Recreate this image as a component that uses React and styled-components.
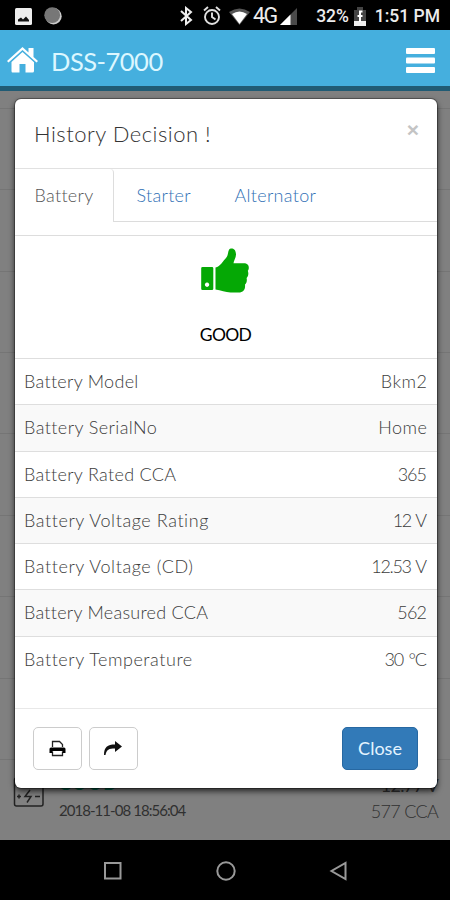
import styled, { createGlobalStyle } from "styled-components";

const GlobalStyle = createGlobalStyle`
  * {
    box-sizing: border-box;
  }

  body {
    margin: 0;
    background: #000;
    font-family: Lato, "Open Sans", sans-serif;
    font-weight: 300;
  }
`;

const Screen = styled.div`
  position: relative;
  display: flex;
  flex-direction: column;
  width: 450px;
  height: 900px;
  overflow: hidden;
`;

const StatusBar = styled.div`
  display: flex;
  align-items: center;
  justify-content: space-between;
  height: 30px;
  padding: 2px 10px 0 15px;
  background: #000;
  color: #ececec;
  font-family: Roboto, sans-serif;
  font-weight: 500;
  font-size: 17.5px;
`;

const StatusGroup = styled.div`
  display: flex;
  align-items: center;
`;

const Icon = styled.svg`
  display: block;
  flex: none;
  margin-left: ${(props) => props.$gap || 0}px;
`;

const StatusText = styled.span`
  margin-left: ${(props) => props.$gap}px;
  font-size: ${(props) => props.$size || 17.5}px;
  font-weight: ${(props) => props.$weight || 500};
  letter-spacing: ${(props) => props.$spacing || 0}px;
  line-height: 30px;
  white-space: nowrap;
`;

const AppBar = styled.header`
  display: flex;
  align-items: center;
  height: 61px;
  padding: 5px 15px 0 7px;
  background: #45afde;
  border-bottom: 5px solid #205b74;
`;

const AppTitle = styled.h1`
  flex: 1;
  margin: 2px 0 0 13px;
  font-size: 25.5px;
  font-weight: 400;
  letter-spacing: -0.5px;
  line-height: 30px;
  color: #dcf7ff;
`;

const History = styled.div`
  flex: 1;
  display: flex;
  flex-direction: column;
  padding-top: 17px;
  background: #808080;
`;

const HistoryRow = styled.div`
  display: flex;
  justify-content: space-between;
  height: 81.4px;
  padding: 12px 12px 0 13px;
  border-top: 1px solid #757575;
`;

const HistoryInfo = styled.div`
  display: flex;
  gap: 14px;
`;

const HistoryText = styled.div`
  display: flex;
  flex-direction: column;
  align-items: ${(props) => (props.$right ? "flex-end" : "flex-start")};
  color: #303030;
  line-height: 26px;
`;

const Verdict = styled.b`
  height: 25px;
  color: #00684c;
  font-size: 18px;
  font-weight: 700;
  letter-spacing: 1px;
  line-height: 22px;
`;

const Stamp = styled.span`
  margin-left: 1px;
  font-size: 15px;
  font-weight: 400;
  letter-spacing: -0.95px;
`;

const Reading = styled.span`
  font-size: 18px;
  font-weight: ${(props) => (props.$bold ? 400 : 300)};
  letter-spacing: -0.7px;
`;

const Modal = styled.section`
  position: absolute;
  left: 15px;
  top: 99px;
  width: 422px;
  height: 689px;
  display: flex;
  flex-direction: column;
  border-radius: 6px;
  background: #fff;
  box-shadow: 0 0 0 1px rgba(0, 0, 0, 0.3), 0 3px 6px rgba(0, 0, 0, 0.75);
`;

const ModalHeader = styled.div`
  display: flex;
  justify-content: space-between;
  height: 70px;
  padding: 20px 18px 0 19px;
  border-bottom: 1px solid #e1e1e1;
`;

const ModalTitle = styled.h2`
  margin: 0;
  font-size: 22px;
  font-weight: 300;
  letter-spacing: 0.5px;
  line-height: 30px;
  color: #333;
`;

const Dismiss = styled.button`
  height: 22px;
  padding: 0;
  border: 0;
  background: none;
  color: #c4c4c4;
  font: 700 21px/22px "Liberation Sans", sans-serif;
`;

const Tabs = styled.div`
  display: flex;
  height: 53px;
  border-bottom: 1px solid #dcdcdc;
`;

const Tab = styled.div`
  height: 53px;
  width: ${(props) => props.$width}px;
  padding-left: ${(props) => (props.$active ? 19.5 : 22.5)}px;
  border-right: 1px solid ${(props) => (props.$active ? "#ddd" : "transparent")};
  border-top-right-radius: 4px;
  background: ${(props) => (props.$active ? "#fff" : "transparent")};
  color: ${(props) => (props.$active ? "#555" : "#3070b5")};
  font-size: 18px;
  letter-spacing: 0.3px;
  line-height: 52px;
  white-space: nowrap;
`;

const Result = styled.div`
  display: flex;
  flex-direction: column;
  align-items: center;
  height: 123px;
  margin-top: 13px;
  padding: 12px 2px 0 0;
  border-top: 1px solid #ddd;
  color: #000;
`;

const ResultLabel = styled.div`
  margin: 27px 0 0 1px;
  font-size: 17.5px;
  font-weight: 400;
  letter-spacing: -0.7px;
  line-height: 28px;
`;

const Table = styled.div`
  display: flex;
  flex-direction: column;
`;

const Row = styled.div`
  display: flex;
  justify-content: space-between;
  height: 46.3px;
  padding: 0 10px 0 9px;
  border-top: 1px solid #dedede;
  font-size: 18px;
  line-height: 45.6px;
  color: #3c3c3c;

  &:nth-child(even) {
    background: #f9f9f9;
  }
`;

const Cell = styled.span`
  letter-spacing: ${(props) => props.$spacing}px;
  margin-right: ${(props) => -props.$spacing}px;
`;

const Value = styled(Cell)`
  word-spacing: 1.5px;
`;

const ModalFooter = styled.div`
  display: flex;
  gap: 6.5px;
  height: 80px;
  margin-top: auto;
  padding: 18px 19px 0 18px;
  border-top: 1px solid #e8e8e8;
`;

const IconButton = styled.button`
  display: flex;
  align-items: center;
  justify-content: center;
  width: 49px;
  height: 43px;
  padding: 0 0 1px;
  border: 1px solid #ccc;
  border-radius: 5px;
  background: #fff;
`;

const CloseButton = styled.button`
  width: 76px;
  height: 43px;
  margin-left: auto;
  padding: 0 0 2px;
  border: 1px solid #2768a2;
  border-radius: 5px;
  background: #327ab8;
  color: #e5f4ff;
  font: 400 18px Lato, sans-serif;
`;

const NavBar = styled.nav`
  display: flex;
  align-items: center;
  justify-content: space-between;
  height: 60px;
  padding: 1px 102px 0 103px;
  background: #000;
`;

const tabs = [
  { label: "Battery", width: 99, active: true },
  { label: "Starter", width: 98 },
  { label: "Alternator", width: 130 },
];

// name, value, and the tracking of each
const rows = [
  ["Battery Model", "Bkm2", 0.3, 0.5],
  ["Battery SerialNo", "Home", 0.42, 0.5],
  ["Battery Rated CCA", "365", 0.32, -1],
  ["Battery Voltage Rating", "12 V", 0.58, -1.4],
  ["Battery Voltage (CD)", "12.53 V", 0.58, -1.3],
  ["Battery Measured CCA", "562", 0.26, -0.8],
  ["Battery Temperature", "30 °C", 0.55, -1.1],
];

function StatusIcons() {
  return (
    <StatusBar>
      <StatusGroup>
        <Icon width="17" height="17" viewBox="0 0 17 17">
          <rect width="17" height="17" rx="1.5" fill="#eee" />
          <path d="M3 13.5v-2l3-2 2 2 3-3 3 3.5v1.5z" fill="#111" />
        </Icon>
        <Icon $gap={12} width="18" height="18" viewBox="0 0 18 18">
          <circle cx="9.5" cy="9.3" r="8.2" fill="#ccc" />
          <circle cx="8.2" cy="8.2" r="7.9" fill="#777" />
        </Icon>
      </StatusGroup>
      <StatusGroup>
        <Icon width="13" height="20" viewBox="0 0 13 20" fill="none" stroke="#eee" strokeWidth="2">
          <path d="M1 5l10 9-5 4V2l5 4L1 15" />
        </Icon>
        <Icon $gap={10} width="18" height="20" viewBox="0 0 18 20" fill="none" stroke="#e0e0e0" strokeWidth="1.9">
          <circle cx="9" cy="11" r="7" />
          <path d="M9 6.5V11l3.5 2.5M1 4.5L5 1M17 4.5L13 1" />
        </Icon>
        <Icon $gap={8} width="21" height="17" viewBox="0 0 21 17">
          <path d="M0 4Q10.5-3 21 4L10.5 17z" fill="#555" />
          <path d="M3 6Q10.5 1 18 6L10.5 16z" fill="#fff" />
        </Icon>
        <StatusText $gap={3} $size={21.5} $weight={400} $spacing={-1.8}>4G</StatusText>
        <Icon $gap={4} width="17" height="17" viewBox="0 0 17 17">
          <path d="M17 0v17H0z" fill="#4a4a4a" />
          <path d="M10.5 6.5V17H0z" fill="#fff" />
        </Icon>
        <StatusText $gap={19} $spacing={-0.1}>32%</StatusText>
        <Icon $gap={5} width="12" height="19" viewBox="0 0 12 19">
          <path d="M0 3h3V0h6v3h3v16H0z" fill="#444" />
          <path d="M0 14h12v5H0z" fill="#eee" />
          <path d="M8.5 4.5H6v4.5M3.5 9h5M6 9v6" fill="none" stroke="#fff" strokeWidth="2" />
        </Icon>
        <StatusText $gap={9}>1:51 PM</StatusText>
      </StatusGroup>
    </StatusBar>
  );
}

function HomeIcon() {
  return (
    <Icon width="31" height="27" viewBox="0 0 31 27" fill="#fff">
      <path d="M15.5 0l6 5.5V1h5v9l4.500 4-1.500 1.500-14-12.500L1.500 15.500 0 14z" />
      <path d="M15.5 5L27 15.300V24q0 1.500-1.500 1.500H18.500V17h-6v8.500H5.500Q4.500 25.500 4.500 24v-9z" />
    </Icon>
  );
}

function ThumbIcon() {
  return (
    <Icon width="48" height="46" viewBox="0 0 48 46" fill="#05a805">
      <path
        fillRule="evenodd"
        d="M1.500 19h9.500q1.300 0 1.300 1.300v20.400q0 1.300-1.300 1.300H1.500Q.2 42 .2 40.700V20.300Q.2 19 1.500 19zM6 34.500a2.200 2.200 0 1 0 .1 0z"
      />
      <path d="M14.500 19.500c5-1 7.500-6.500 10.500-9.500 2.500-2.500 1.500-6 3.200-8.500C29.500-.2 35-.2 35 6.500c0 3.500-2.500 6.500-2.500 8.800h10.500c5.500 0 5.500 5.500 3.800 7.500 1 2.500.6 5.500-1.200 7.200.7 3-.2 5.200-1.600 6.600.5 4.500-1.500 7.900-6.500 7.900h-8c-5 0-9.500-2.500-15-3z" />
    </Icon>
  );
}

function BatteryIcon() {
  return (
    <Icon width="31" height="36" viewBox="0 0 31 36" fill="none" stroke="#222" strokeWidth="1.5">
      <rect x="1.5" y="6" width="28.5" height="28" rx="2" />
      <path d="M4 24.500h4M6 22.500v4M22 24.500h5M17 18l-5 6.500h6l-4 6" />
    </Icon>
  );
}

export default function App() {
  const pastTests = Array.from({ length: 8 });

  return (
    <>
      <GlobalStyle />
      <Screen>
        <StatusIcons />
        <AppBar>
          <HomeIcon />
          <AppTitle>DSS-7000</AppTitle>
          <Icon width="29" height="25" viewBox="0 0 29 25" fill="#fff">
            <rect width="29" height="6" rx="1" />
            <rect y="9.5" width="29" height="6" rx="1" />
            <rect y="19" width="29" height="6" rx="1" />
          </Icon>
        </AppBar>
        <History>
          {pastTests.map((_, i) => (
            <HistoryRow key={i} />
          ))}
          <HistoryRow>
            <HistoryInfo>
              <BatteryIcon />
              <HistoryText>
                <Verdict>GOOD</Verdict>
                <Stamp>2018-11-08 18:56:04</Stamp>
              </HistoryText>
            </HistoryInfo>
            <HistoryText $right>
              <Reading $bold>12.77 V</Reading>
              <Reading>577 CCA</Reading>
            </HistoryText>
          </HistoryRow>
        </History>
        <NavBar>
          <Icon width="19" height="19" fill="none" stroke="#999" strokeWidth="2">
            <rect x="2" y="2" width="15.5" height="15.5" />
          </Icon>
          <Icon width="20" height="20" fill="none" stroke="#999" strokeWidth="2">
            <circle cx="10" cy="10" r="8.7" />
          </Icon>
          <Icon width="19" height="20" fill="none" stroke="#999" strokeWidth="2">
            <path d="M16.5 2v16L2.500 10z" />
          </Icon>
        </NavBar>

        <Modal>
          <ModalHeader>
            <ModalTitle>History Decision !</ModalTitle>
            <Dismiss>×</Dismiss>
          </ModalHeader>
          <Tabs>
            {tabs.map((tab) => (
              <Tab key={tab.label} $active={tab.active} $width={tab.width}>
                {tab.label}
              </Tab>
            ))}
          </Tabs>
          <Result>
            <ThumbIcon />
            <ResultLabel>GOOD</ResultLabel>
          </Result>
          <Table>
            {rows.map(([name, value, nameSpacing, valueSpacing]) => (
              <Row key={name}>
                <Cell $spacing={nameSpacing}>{name}</Cell>
                <Value $spacing={valueSpacing}>{value}</Value>
              </Row>
            ))}
          </Table>
          <ModalFooter>
            <IconButton>
              <Icon width="17" height="17" viewBox="0 0 17 17">
                <path d="M3.5 7V1.500h7l3 3V7M3.500 11.500v4h10v-4" fill="#fff" stroke="#222" strokeWidth="1.3" />
                <path d="M2 7.500h13q1.500 0 1.500 1.500v4h-3v-2h-10v2h-3V9q0-1.500 1.500-1.500z" fill="#000" />
              </Icon>
            </IconButton>
            <IconButton>
              <Icon width="18" height="15" viewBox="0 0 18 15">
                <path d="M0 14C0 6 3.500 3.500 11 3.500V0l7 5.500-7 5.500V7.500C5 7.500 2.500 8.500 1.500 14z" fill="#111" />
              </Icon>
            </IconButton>
            <CloseButton>Close</CloseButton>
          </ModalFooter>
        </Modal>
      </Screen>
    </>
  );
}
